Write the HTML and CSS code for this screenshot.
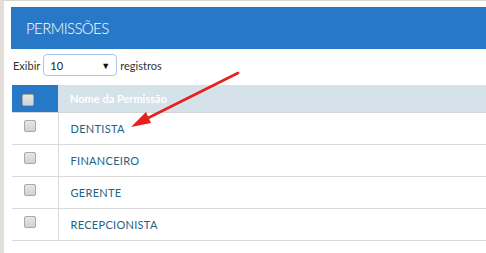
FILE: index.html
```html
<!DOCTYPE html>
<html>
<head>
<meta charset="utf-8">
<link rel="stylesheet" href="styles.css">
</head>
<body>
<div class="page">
  <div class="panel-head">PERMISSÕES</div>
  <div class="length">
    <span>Exibir</span>
    <div class="select"><span>10</span><span class="caret">▼</span></div>
    <span>registros</span>
  </div>
  <table class="grid">
    <thead>
      <tr><th class="chk-col"><span class="cb"></span></th><th class="name-col">Nome da Permissão</th></tr>
    </thead>
    <tbody>
      <tr><td class="chk-col"><span class="cb"></span></td><td>DENTISTA</td></tr>
      <tr><td class="chk-col"><span class="cb"></span></td><td>FINANCEIRO</td></tr>
      <tr><td class="chk-col"><span class="cb"></span></td><td>GERENTE</td></tr>
      <tr><td class="chk-col"><span class="cb"></span></td><td>RECEPCIONISTA</td></tr>
    </tbody>
  </table>
  <svg class="arrow" width="486" height="253" viewBox="0 0 486 253">
    <line x1="238" y1="73" x2="144" y2="120" stroke="#e8201c" stroke-width="2.6" stroke-linecap="round"/>
    <polygon points="131,127 146,112 151,123" fill="#e8201c"/>
  </svg>
</div>
</body>
</html>
```
FILE: styles.css
```css
html, body { margin: 0; padding: 0; background: #fff; }
body { font-family: Lato, "Open Sans", sans-serif; width: 486px; height: 253px; overflow: hidden; }
.page {
  position: relative;
  box-sizing: border-box;
  height: 253px;
  border-top: 1px solid #dad7d1;
  border-left: 4px solid #e2dfda;
  padding: 6px 0 0 7px;
}
.panel-head {
  background: #2878c8;
  height: 42px;
  box-sizing: border-box;
  padding-left: 15px;
  color: #fff;
  font-size: 15px;
  font-weight: 300;
  letter-spacing: -0.6px;
  line-height: 43px;
}
.length {
  display: flex;
  align-items: center;
  gap: 3px;
  margin-top: 5px;
  padding-left: 2px;
  font-size: 11px;
  color: #333;
  height: 22px;
}
.select {
  box-sizing: border-box;
  width: 74px;
  height: 22px;
  border: 1px solid #a9c6ee;
  border-radius: 4px;
  display: flex;
  align-items: center;
  justify-content: space-between;
  padding: 0 6px 0 6px;
  font-size: 11px;
  color: #222;
}
.caret { font-size: 9px; color: #111; }
.grid {
  margin-top: 9px;
  margin-left: 1px;
  width: 474px;
  border-collapse: collapse;
  font-size: 11px;
}
.grid th {
  height: 27px;
  padding: 0;
  background: #d5e2ea;
  border-bottom: 1px solid #d6d6d6;
  color: #fff;
  font-weight: 700;
  text-align: left;
  font-size: 11px;
}
.grid th.chk-col { background: #2878c8; padding-left: 10px; }
.grid th.name-col { padding-left: 12px; }
.chk-col { width: 46px; box-sizing: border-box; }
.grid td {
  height: 31px;
  padding: 0;
  border-bottom: 1px solid #dadada;
  color: #1b6486;
  letter-spacing: 0.3px;
}
.grid td + td { padding-left: 12px; border-left: 1px solid #dadada; }
.grid td.chk-col { vertical-align: top; padding-left: 12px; }
.cb {
  display: inline-block;
  box-sizing: border-box;
  width: 12px;
  height: 12px;
  border: 1px solid #a8a8a8;
  border-radius: 2px;
  background: linear-gradient(#e6e6e6, #d2d2d2);
  vertical-align: middle;
}
.grid td .cb { margin-top: 7px; }
.arrow { position: absolute; left: -4px; top: -1px; pointer-events: none; }
```
